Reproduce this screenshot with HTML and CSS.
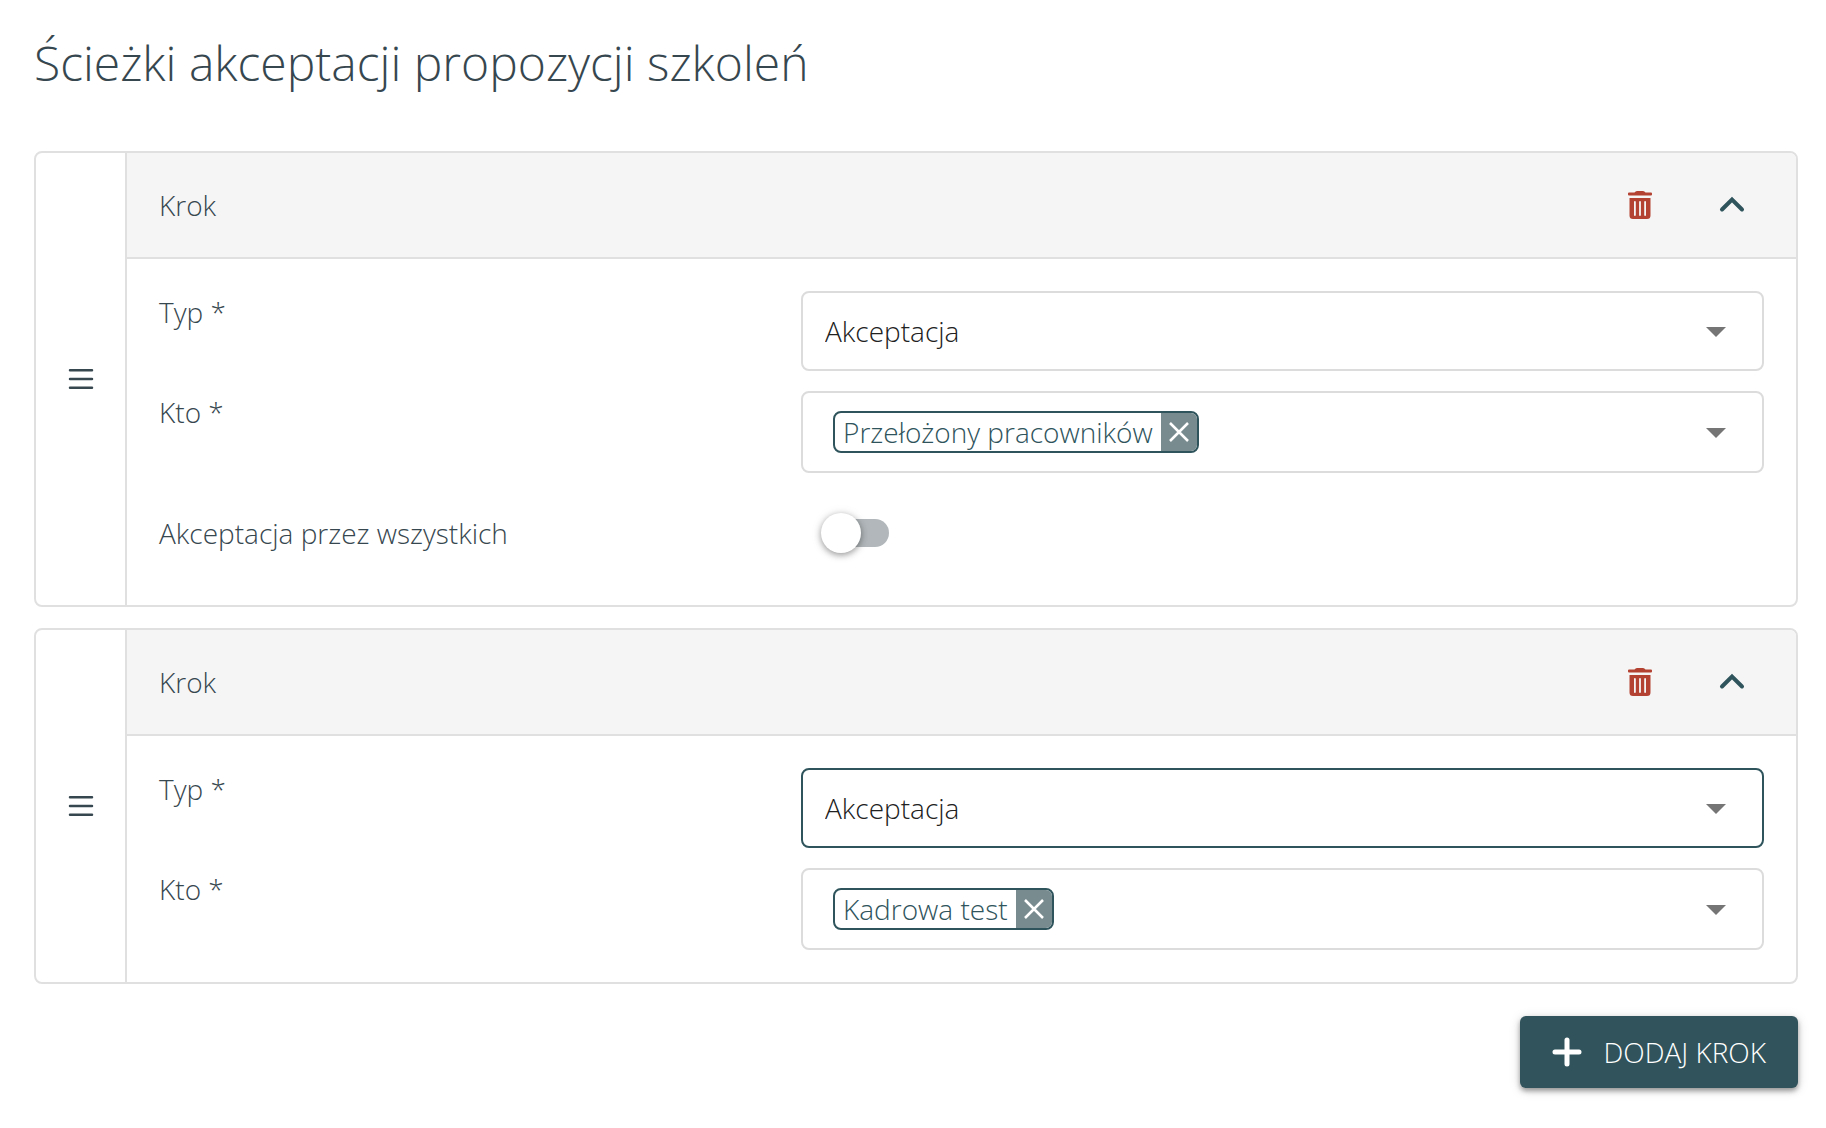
FILE: index.html
```html
<!DOCTYPE html>
<html lang="pl">
<head>
  <meta charset="UTF-8" />
  <title>Ścieżki akceptacji propozycji szkoleń</title>
  <meta name="viewport" content="width=device-width, initial-scale=1.0" />
  <link rel="stylesheet" href="styles.css">
</head>
<body>

<h1>Ścieżki akceptacji propozycji szkoleń</h1>

<form class="steps">

  <section class="step">
    <button type="button" class="step-handle" aria-label="Przesuń krok">
      <svg width="26" height="24" viewBox="0 0 26 24"><path d="M2 3.2h22M2 12h22M2 20.8h22" /></svg>
    </button>
    <div class="step-main">
      <header class="step-header">
        <h2>Krok</h2>
        <button type="button" class="icon-button delete" aria-label="Usuń krok">
          <svg width="26" height="28" viewBox="0 0 26 28"><path fill-rule="evenodd" d="M2 1.500h5.500Q8.500 0 10 0h6q1.500 0 2.500 1.500H24q1 0 1 1v1q0 1-1 1H2q-1 0-1-1v-1q0-1 1-1zM2.500 7h21v17.500q0 3.500-3.500 3.500H6q-3.500 0-3.500-3.500zM7 11v13q0 1 .9 1t.9-1V11q0-1-.9-1T7 11zM12.100 11v13q0 1 .9 1t.9-1V11q0-1-.9-1t-.9 1zM17.200 11v13q0 1 .9 1t.9-1V11q0-1-.9-1t-.9 1z" /></svg>
        </button>
        <button type="button" class="icon-button toggle" aria-label="Zwiń krok" aria-expanded="true">
          <svg width="26" height="18" viewBox="0 0 26 18"><path d="M3 13.500 13 3.500 23 13.500" /></svg>
        </button>
      </header>
      <div class="step-body">
        <label for="type-1">Typ *</label>
        <div class="select">
          <select id="type-1"><option>Akceptacja</option></select>
          <svg class="arrow" width="48" height="48" viewBox="0 0 24 24"><path d="M7 10l5 5 5-5z" /></svg>
        </div>

        <label for="who-1">Kto *</label>
        <div class="chips">
          <span class="chip">
            <span class="chip-label">Przełożony pracowników</span>
            <button type="button" class="chip-remove" aria-label="Usuń">
              <svg width="22" height="22" viewBox="0 0 22 22"><path d="M2 2l18 18M20 2L2 20" /></svg>
            </button>
          </span>
          <button type="button" class="chips-open" id="who-1" aria-label="Kto">
            <svg class="arrow" width="48" height="48" viewBox="0 0 24 24"><path d="M7 10l5 5 5-5z" /></svg>
          </button>
        </div>

        <label class="middle" for="all-1">Akceptacja przez wszystkich</label>
        <div class="switch-row">
          <input type="checkbox" class="switch" id="all-1" />
        </div>
      </div>
    </div>
  </section>

  <section class="step">
    <button type="button" class="step-handle" aria-label="Przesuń krok">
      <svg width="26" height="24" viewBox="0 0 26 24"><path d="M2 3.2h22M2 12h22M2 20.8h22" /></svg>
    </button>
    <div class="step-main">
      <header class="step-header">
        <h2>Krok</h2>
        <button type="button" class="icon-button delete" aria-label="Usuń krok">
          <svg width="26" height="28" viewBox="0 0 26 28"><path fill-rule="evenodd" d="M2 1.500h5.500Q8.500 0 10 0h6q1.500 0 2.500 1.500H24q1 0 1 1v1q0 1-1 1H2q-1 0-1-1v-1q0-1 1-1zM2.500 7h21v17.500q0 3.500-3.500 3.500H6q-3.500 0-3.500-3.500zM7 11v13q0 1 .9 1t.9-1V11q0-1-.9-1T7 11zM12.100 11v13q0 1 .9 1t.9-1V11q0-1-.9-1t-.9 1zM17.200 11v13q0 1 .9 1t.9-1V11q0-1-.9-1t-.9 1z" /></svg>
        </button>
        <button type="button" class="icon-button toggle" aria-label="Zwiń krok" aria-expanded="true">
          <svg width="26" height="18" viewBox="0 0 26 18"><path d="M3 13.500 13 3.500 23 13.500" /></svg>
        </button>
      </header>
      <div class="step-body">
        <label for="type-2">Typ *</label>
        <div class="select active">
          <select id="type-2"><option>Akceptacja</option></select>
          <svg class="arrow" width="48" height="48" viewBox="0 0 24 24"><path d="M7 10l5 5 5-5z" /></svg>
        </div>

        <label for="who-2">Kto *</label>
        <div class="chips">
          <span class="chip">
            <span class="chip-label">Kadrowa test</span>
            <button type="button" class="chip-remove" aria-label="Usuń">
              <svg width="22" height="22" viewBox="0 0 22 22"><path d="M2 2l18 18M20 2L2 20" /></svg>
            </button>
          </span>
          <button type="button" class="chips-open" id="who-2" aria-label="Kto">
            <svg class="arrow" width="48" height="48" viewBox="0 0 24 24"><path d="M7 10l5 5 5-5z" /></svg>
          </button>
        </div>
      </div>
    </div>
  </section>

  <button type="button" class="add-button">
    <svg width="30" height="30" viewBox="0 0 30 30"><path d="M15 3v24M3 15h24" /></svg>
    DODAJ KROK
  </button>

</form>

</body>
</html>
```
FILE: styles.css
```css
* {
  box-sizing: border-box;
}

body {
  font-family: 'Open Sans', sans-serif;
  font-size: 28px;
  font-weight: 300;
  line-height: 42px;
  margin: 0;
  padding: 31px 28px 40px 34px;
  background: #fff;
  color: #37474f;
}

button,
select {
  font: inherit;
  color: inherit;
  background: none;
  border: none;
  margin: 0;
  padding: 0;
  cursor: pointer;
}

svg {
  display: block;
}

h1 {
  font-size: 48px;
  font-weight: 300;
  line-height: 64px;
  margin: 0 0 56px;
}

.steps {
  display: flex;
  flex-direction: column;
  gap: 21px;
}

/* Step card */
.step {
  display: flex;
  border: 2px solid #e0e0e0;
  border-radius: 8px;
  overflow: hidden;
}

.step-handle {
  display: flex;
  align-items: center;
  justify-content: center;
  width: 91px;
  border-right: 2px solid #e0e0e0;
  cursor: move;
}

.step-handle path {
  fill: none;
  stroke: #37474f;
  stroke-width: 2.5;
  stroke-linecap: round;
}

.step-main {
  flex: 1;
}

.step-header {
  display: flex;
  align-items: center;
  gap: 28px;
  padding: 20px 32px;
  background: #f5f5f5;
  border-bottom: 2px solid #e0e0e0;
}

.step-header h2 {
  flex: 1;
  font-size: 28px;
  font-weight: 300;
  margin: 0;
}

.icon-button {
  display: flex;
  align-items: center;
  justify-content: center;
  width: 64px;
  height: 64px;
}

.delete path {
  fill: #b44232;
}

.toggle path {
  fill: none;
  stroke: #2f545c;
  stroke-width: 4;
  stroke-linecap: round;
}

.step-body {
  display: grid;
  grid-template-columns: 40% 60%;
  row-gap: 20px;
  padding: 32px;
}

.step-body .middle {
  align-self: center;
}

/* Fields */
.select {
  display: grid;
  align-items: center;
  height: 80px;
  border: 2px solid #dcdcdc;
  border-radius: 8px;
}

.select.active {
  border-color: #2f545c;
}

.select select,
.select .arrow {
  grid-area: 1 / 1;
}

.select select {
  appearance: none;
  width: 100%;
  height: 100%;
  padding: 0 80px 0 22px;
  color: #212121;
  outline: none;
}

.select .arrow {
  justify-self: end;
  margin-right: 22px;
  pointer-events: none;
}

.arrow {
  fill: #757575;
}

.chips {
  display: flex;
  align-items: center;
  justify-content: space-between;
  padding: 18px 22px 18px 30px;
  height: 82px;
  border: 2px solid #dcdcdc;
  border-radius: 8px;
}

.chip {
  display: flex;
  height: 42px;
  border: 2px solid #2f545c;
  border-radius: 8px;
  color: #2f545c;
  overflow: hidden;
}

.chip-label {
  padding: 0 8px;
  line-height: 38px;
}

.chip-remove {
  display: flex;
  align-items: center;
  justify-content: center;
  width: 36px;
  background: #788c90;
}

.chip-remove path {
  stroke: #fff;
  stroke-width: 2.5;
}

/* Switch */
.switch-row {
  display: flex;
  align-items: center;
  height: 80px;
  padding-left: 20px;
}

.switch {
  appearance: none;
  display: grid;
  align-items: center;
  width: 68px;
  height: 40px;
  margin: 0;
  cursor: pointer;
}

.switch::before,
.switch::after {
  content: '';
  grid-area: 1 / 1;
}

.switch::before {
  height: 28px;
  margin-left: 6px;
  border-radius: 14px;
  background: #b1b7ba;
}

.switch::after {
  width: 40px;
  height: 40px;
  border-radius: 50%;
  background: #fff;
  box-shadow: 0 2px 6px rgba(0, 0, 0, 0.35), 0 1px 12px rgba(0, 0, 0, 0.1);
}

.switch:checked::after {
  justify-self: end;
}

.add-button {
  display: flex;
  align-items: center;
  gap: 21px;
  align-self: flex-end;
  height: 72px;
  margin-top: 11px;
  padding: 0 32px;
  border-radius: 6px;
  background: #31545c;
  color: #fff;
  box-shadow: 0 3px 5px rgba(0, 0, 0, 0.35), 0 2px 12px rgba(0, 0, 0, 0.15);
}

.add-button path {
  fill: none;
  stroke: #fff;
  stroke-width: 5;
  stroke-linecap: round;
}
```
